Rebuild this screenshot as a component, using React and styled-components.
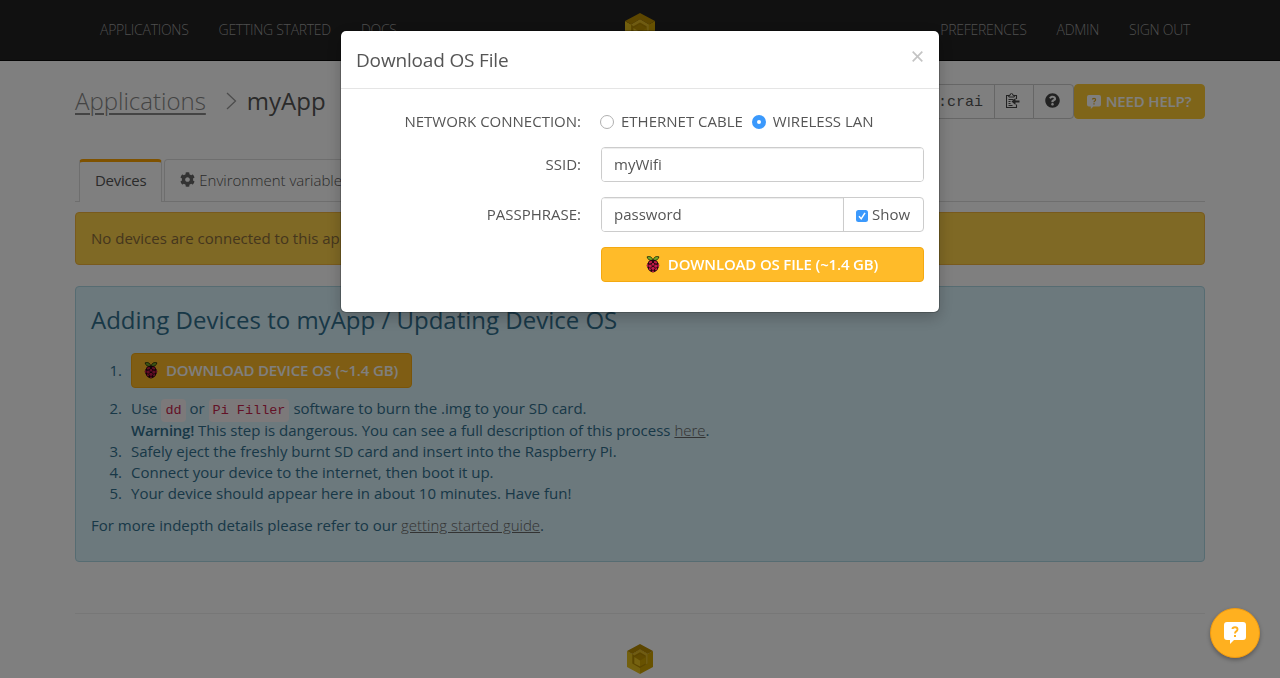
import React from 'react';
import styled, { createGlobalStyle } from 'styled-components';
import { FaQuestionCircle, FaCog } from 'react-icons/fa';

const Global = createGlobalStyle`
  *, *::before, *::after { box-sizing: border-box; }
  html, body { margin: 0; height: 678px; overflow: hidden; }
  body {
    background: #fff; color: #555;
    font: 15px/21px "Open Sans", "Noto Sans", sans-serif;
  }
`;

const Page = styled.div`height: 678px; overflow: hidden;`;

const Container = styled.div`width: 1130px; margin: 0 auto;`;

const Navbar = styled.header`
  height: 61px;
  background: #222;
  border-bottom: 1px solid #080808;
`;
const NavInner = styled(Container)`
  height: 60px;
  padding: 0 15px 0 25px;
  display: grid;
  grid-template-columns: 1fr 30px 1fr;
  align-items: center;
  & > svg { margin-left: -5px; }
`;
const NavGroup = styled.nav`
  display: flex;
  gap: 30px;
  padding-bottom: 1px;
  justify-content: ${p => p.$end ? 'flex-end' : 'flex-start'};
`;
const NavLink = styled.a`
  font-size: 14px;
  font-weight: 300;
  letter-spacing: -0.28px;
  text-transform: uppercase;
  color: #9d9d9d;
  white-space: nowrap;
`;

const Heading = styled.div`
  display: flex;
  align-items: center;
  justify-content: space-between;
  height: 35px;
  margin-top: 23px;
`;
const Crumbs = styled.h1`
  margin: 0;
  padding-bottom: 2px;
  display: flex;
  align-items: center;
  font-size: 24px;
  line-height: 34px;
  font-weight: 400;
  color: #555;
  & > svg { margin: 1px 10px 0 20px; }
`;
const CrumbLink = styled.a`
  font-weight: 300;
  color: #888;
  text-decoration: underline;
  text-decoration-thickness: 2px;
  text-underline-offset: 3px;
`;
const Tools = styled.div`display: flex; height: 35px;`;
const Command = styled.div`
  width: 420px;
  border: 1px solid #ccc;
  padding: 0 11px;
  line-height: 36px;
  text-align: right;
  white-space: nowrap;
  overflow: hidden;
  font-family: "Liberation Mono", monospace;
  color: #555;
`;
const ToolButton = styled.button`
  width: ${p => p.$last ? 41 : 40}px;
  padding: 0 2px 2px 0;
  margin-left: -1px;
  border: 1px solid #ccc;
  border-radius: ${p => p.$last ? '0 4px 4px 0' : 0};
  background: #fff;
  color: #444;
  display: flex;
  align-items: center;
  justify-content: center;
`;
const Button = styled.button`
  height: 35px;
  width: ${p => p.$width};
  padding: 0 1px 0 0;
  display: flex;
  align-items: center;
  justify-content: center;
  gap: ${p => p.$gap || 8}px;
  border: 1px solid ${p => p.$flat ? '#ffcb33' : '#f4a911'};
  border-radius: 4px;
  background: ${p => p.$bg || '#ffbb29'};
  color: #fff;
  font: 600 15px/21px "Open Sans", sans-serif;
  letter-spacing: -0.16px;
  text-transform: uppercase;
  white-space: nowrap;
`;

const Tabs = styled.div`
  display: flex;
  gap: 2px;
  height: 43px;
  margin-top: 40px;
  padding-left: 4px;
  border-bottom: 1px solid #ddd;
`;
const Tab = styled.div`
  height: ${p => p.$active ? 43 : 42}px;
  padding: ${p => p.$active ? '8px 15px 0' : '10px 15px 0'};
  border: 1px solid #ddd;
  border-bottom: 0;
  border-top: ${p => p.$active ? '3px solid #ffa500' : '1px solid #ddd'};
  border-radius: 4px 4px 0 0;
  background: #fff;
  font-weight: ${p => p.$active ? 400 : 300};
  color: #555;
  letter-spacing: ${p => p.$active ? '-0.3px' : '0'};
  display: flex;
  gap: 4px;
  white-space: nowrap;
  & > svg { color: #666; margin-top: 2px; }
`;

const Notice = styled.div`
  height: 53px;
  margin-top: 10px;
  padding: 15px;
  border: 1px solid #f2b53b;
  border-radius: 4px;
  background: #ffd24a;
  color: #8a6d3b;
`;

const Panel = styled.section`
  height: 276px;
  margin-top: 21px;
  padding: 15px;
  border: 1px solid #acd8e4;
  border-radius: 4px;
  background: #d9f2fa;
  color: #31708f;
`;
const PanelTitle = styled.h2`
  margin: 1px 0 17px;
  font-size: 24px;
  line-height: 33px;
  font-weight: 400;
`;
const Steps = styled.ol`
  margin: 0 0 11px;
  padding: 0;
  display: flex;
  flex-direction: column;
  list-style: none;
  counter-reset: step;
`;
const Step = styled.li`
  display: grid;
  grid-template-columns: 31px 1fr;
  column-gap: 9px;
  margin-bottom: ${p => p.$gap || 0}px;
  line-height: ${p => p.$tall ? 34 : 21}px;
  counter-increment: step;
  &::before { content: counter(step) '.'; text-align: right; }
`;
const Line = styled.div`
  height: ${p => p.$h || 21}px;
  b { font-weight: 600; letter-spacing: -0.25px; }
`;
const Code = styled.code`
  padding: 4px;
  border-radius: 4px;
  background: #f9f2f4;
  color: #c7254e;
  font: 13.5px "Liberation Mono", monospace;
`;
const TextLink = styled.a`
  color: #666;
  font-weight: 300;
  text-decoration: underline;
`;
const Para = styled.p`margin: 0;`;

const Footer = styled.footer`
  margin-top: 51px;
  padding-top: 30px;
  border-top: 1px solid #eee;
  display: flex;
  justify-content: center;
`;

const Backdrop = styled.div`
  position: fixed;
  inset: 0;
  display: flex;
  justify-content: center;
  align-items: flex-start;
  padding-top: 30px;
  background: rgba(0, 0, 0, 0.5);
`;
const Dialog = styled.div`
  width: 600px;
  height: 283px;
  border: 1px solid rgba(0, 0, 0, 0.2);
  border-radius: 6px;
  background: #fff;
  background-clip: padding-box;
  box-shadow: 0 5px 15px rgba(0, 0, 0, 0.2);
`;
const DialogHead = styled.div`
  height: 58px;
  padding: 0 16px 0 15px;
  display: flex;
  align-items: center;
  justify-content: space-between;
  border-bottom: 1px solid #e5e5e5;
  & > svg { margin-bottom: 6px; }
`;
const DialogTitle = styled.h4`
  margin: 0;
  font-size: 19px;
  line-height: 26px;
  font-weight: 400;
  letter-spacing: -0.17px;
`;
const Form = styled.form`
  padding: 15px;
  display: grid;
  grid-template-columns: 225px 323px;
  grid-template-rows: 28px 35px 35px 35px;
  column-gap: 20px;
  row-gap: 15px;
`;
const Label = styled.label`
  text-align: right;
  line-height: 35px;
  text-transform: uppercase;
`;
const Choices = styled.div`
  display: flex;
  align-items: center;
  height: 35px;
  margin-left: -1px;
`;
const Choice = styled.label`
  display: flex;
  align-items: center;
  gap: 7px;
  margin-right: 9px;
  text-transform: uppercase;
  white-space: nowrap;
`;
const Radio = styled.span`
  width: 14px;
  height: 14px;
  border-radius: 50%;
  border: ${p => p.$on ? '5px solid #3b99fc' : '1px solid #b0b0b0'};
  background: #fff;
`;
const Group = styled.div`
  display: flex;
  border: 1px solid #ccc;
  border-radius: 4px;
  overflow: hidden;
`;
const Input = styled.input`
  flex: 1;
  min-width: 0;
  border: 0;
  padding: 0 12px 2px;
  outline: 0;
  color: #555;
  font: 15px "Open Sans", sans-serif;
  box-shadow: inset 0 1px 1px rgba(0, 0, 0, 0.075);
`;
const Addon = styled.label`
  width: 80px;
  padding-left: 12px;
  display: flex;
  align-items: center;
  gap: 4px;
  border-left: 1px solid #ccc;
  & > svg { margin-top: 2px; }
`;
const Row = styled.div`grid-column: 2;`;

const ChatButton = styled.button`
  position: fixed;
  right: 20px;
  bottom: 20px;
  width: 50px;
  height: 50px;
  padding: 0;
  display: flex;
  align-items: center;
  justify-content: center;
  border: 1px solid #f09a10;
  border-radius: 50%;
  background: #ffb01f;
  box-shadow: 0 2px 4px rgba(0, 0, 0, 0.3);
`;

const Cube = ({ width = 26 }) => (
  <svg width={width} height={width * 30 / 26} viewBox="0 0 26 30">
    <path d="M0 7 13 14 13 30 0 23Z" fill="#e6c01c" />
    <path d="M26 7v16l-13 7V14Z" fill="#d0a400" />
    <path d="M13 0 26 7 20.700 10 13 5.500 5.300 10 0 7Z" fill="#b88c00" />
    <path d="M13 5.500 20.700 10v9.500L13 24 5.300 19.500V10Z" fill="#b48a00" />
    <path d="M13 5.500 20.700 10v9.500l-2 1V11.500L13 8.200 7.300 11.500 5.300 10Z" fill="#e0b824" />
    <path d="M13 10 18.700 13 13 16.500 7.300 13Z" fill="#c09400" />
    <path d="M7.300 13 13 16.500V22.500L7.300 19.500Z" fill="#ecc520" />
    <path d="M18.700 13 13 16.500v6l5.700-3Z" fill="#d0a400" />
  </svg>
);

const Raspberry = () => (
  <svg width="14" height="17" viewBox="0.500 0 15 18" preserveAspectRatio="none">
    <path d="M7.700 4.600C4.500 5 2 3.500 1.700.9 4.800-.1 7.400 1.200 7.700 4.600ZM8.300 4.600C11.500 5 14 3.500 14.300.9 11.200-.1 8.600 1.200 8.300 4.600Z" fill="#75a928" stroke="#1d2a0b" strokeWidth=".9" />
    <path d="M8 4c3 0 5 1.200 5.500 3.500 1.600 1.200 1.500 3.800.2 5.200C13 15.300 10.500 17.300 8 17.500 5.500 17.300 3 15.300 2.300 12.700 1 11.300.9 8.700 2.500 7.500 3 5.200 5 4 8 4Z" fill="#20070f" />
    <g fill="#c51a4a">
      <ellipse cx="5.300" cy="6.600" rx="1.900" ry="1.200" transform="rotate(-25 5.300 6.600)" />
      <ellipse cx="10.700" cy="6.600" rx="1.900" ry="1.200" transform="rotate(25 10.700 6.600)" />
      <circle cx="8" cy="8.800" r="1.400" />
      <circle cx="5" cy="10.700" r="1.800" />
      <circle cx="11" cy="10.700" r="1.800" />
      <circle cx="8" cy="13" r="1.700" />
      <ellipse cx="2.300" cy="10" rx=".8" ry="1.800" />
      <ellipse cx="13.700" cy="10" rx=".8" ry="1.800" />
      <ellipse cx="4.700" cy="14" rx="1.300" ry="1" transform="rotate(45 4.700 14)" />
      <ellipse cx="11.300" cy="14" rx="1.300" ry="1" transform="rotate(-45 11.300 14)" />
      <ellipse cx="8" cy="16.100" rx="1.400" ry=".8" />
    </g>
  </svg>
);

const Bubble = ({ size, mark }) => (
  <svg width={size} height={size} viewBox="0 0 22 22">
    <path d="M3 0h16a3 3 0 0 1 3 3v12a3 3 0 0 1-3 3h-9l-4 4v-4H3a3 3 0 0 1-3-3V3a3 3 0 0 1 3-3Z" fill="#fff" />
    <path d="M8.500 7Q8.500 5.300 11 5.300t2.500 2q0 1.300-1.300 2.100Q11 10.200 11 11.500" fill="none" stroke={mark} strokeWidth="1.900" />
    <path d="M10 13h2v2h-2Z" fill={mark} />
  </svg>
);

const PasteIcon = () => (
  <svg width="14" height="15" viewBox="0 0 14 15" fill="none" stroke="currentColor">
    <path d="M3.500 2.500h-3v12h10v-3M10.500 6V2.500h-3" strokeWidth="1.100" />
    <path d="M2.800 4V2.300h1.300Q4.300.3 5.500.3T6.900 2.300h1.400V4Z" strokeWidth="1" />
    <path d="M2.500 6.500h5M2.500 8.500h2M2.500 10.500h2M2.500 12.500h4" />
    <path d="M13.500 8.500H8" strokeWidth="2" />
    <path d="M9.500 5v7L5.500 8.500Z" fill="currentColor" stroke="none" />
  </svg>
);

const Chevron = () => (
  <svg width="11" height="18" viewBox="0 0 11 18" fill="none" stroke="#999" strokeWidth="1.300">
    <path d="M1 1 9.500 9 1 17" />
  </svg>
);

const CloseIcon = () => (
  <svg width="11" height="11" viewBox="0 0 11 11" stroke="#c4c4c4" strokeWidth="1.700">
    <path d="M.7.700 10.300 10.300M10.300.7.700 10.300" />
  </svg>
);

const CheckBox = () => (
  <svg width="12" height="12" viewBox="0 0 12 12">
    <rect width="12" height="12" rx="2.500" fill="#3b99fc" />
    <path d="m3 6.300 2.200 2.500 3.800-6" fill="none" stroke="#fff" strokeWidth="1.500" />
  </svg>
);

export default function App() {
  return (
    <Page>
      <Global />
      <Navbar>
        <NavInner>
          <NavGroup>
            <NavLink>Applications</NavLink>
            <NavLink>Getting Started</NavLink>
            <NavLink>Docs</NavLink>
          </NavGroup>
          <Cube width={30} />
          <NavGroup $end>
            <NavLink>Preferences</NavLink>
            <NavLink>Admin</NavLink>
            <NavLink>Sign out</NavLink>
          </NavGroup>
        </NavInner>
      </Navbar>
      <Container>
        <Heading>
          <Crumbs>
            <CrumbLink>Applications</CrumbLink>
            <Chevron />
            myApp
          </Crumbs>
          <Tools>
            <Command>:crai</Command>
            <ToolButton><PasteIcon /></ToolButton>
            <ToolButton $last><FaQuestionCircle size={15} /></ToolButton>
            <Button $width="131px" $gap={5} $bg="#ffcb33" $flat>
              <Bubble size={14} mark="#e0a820" />Need help?
            </Button>
          </Tools>
        </Heading>
        <Tabs>
          <Tab $active>Devices</Tab>
          <Tab><FaCog size={15} />Environment variables</Tab>
        </Tabs>
        <Notice>No devices are connected to this app</Notice>
        <Panel>
          <PanelTitle>Adding Devices to myApp / Updating Device OS</PanelTitle>
          <Steps>
            <Step $tall $gap={10}>
              <Button $width="281px"><Raspberry />Download device OS (~1.4 GB)</Button>
            </Step>
            <Step>
              <div>
                <Line $h={22}>Use <Code>dd</Code> or <Code>Pi Filler</Code> software to burn the .img to your SD card.</Line>
                <Line><b>Warning!</b> This step is dangerous. You can see a full description of this process <TextLink>here</TextLink>.</Line>
              </div>
            </Step>
            <Step>Safely eject the freshly burnt SD card and insert into the Raspberry Pi.</Step>
            <Step>Connect your device to the internet, then boot it up.</Step>
            <Step>Your device should appear here in about 10 minutes. Have fun!</Step>
          </Steps>
          <Para>For more indepth details please refer to our <TextLink>getting started guide</TextLink>.</Para>
        </Panel>
        <Footer><Cube /></Footer>
      </Container>

      <Backdrop>
        <Dialog>
          <DialogHead>
            <DialogTitle>Download OS File</DialogTitle>
            <CloseIcon />
          </DialogHead>
          <Form>
            <Label>Network connection:</Label>
            <Choices>
              <Choice><Radio />Ethernet cable</Choice>
              <Choice><Radio $on />Wireless LAN</Choice>
            </Choices>
            <Label>SSID:</Label>
            <Group><Input defaultValue="myWifi" /></Group>
            <Label>Passphrase:</Label>
            <Group>
              <Input defaultValue="password" />
              <Addon><CheckBox />Show</Addon>
            </Group>
            <Row><Button $width="323px"><Raspberry />Download OS file (~1.4 GB)</Button></Row>
          </Form>
        </Dialog>
      </Backdrop>
      <ChatButton><Bubble size={22} mark="#ffb01f" /></ChatButton>
    </Page>
  );
}
